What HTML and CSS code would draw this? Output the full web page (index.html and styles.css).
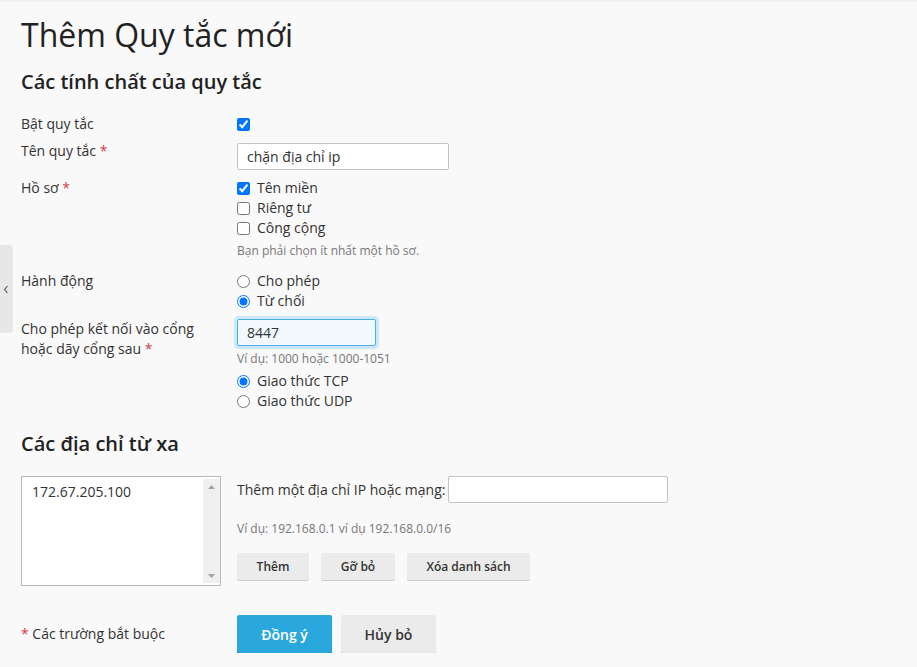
FILE: index.html
```html
<!DOCTYPE html>
<html lang="vi">
<head>
<meta charset="utf-8">
<title>Thêm Quy tắc mới</title>
<link rel="stylesheet" href="styles.css">
</head>
<body>
<div class="side-toggle"><svg width="6" height="9" viewBox="0 0 6 9"><path d="M4.5 1 L1.5 4.5 L4.5 8" fill="none" stroke="#555" stroke-width="1.1"/></svg></div>
<main class="page">
  <h1 class="title">Thêm Quy tắc mới</h1>
  <h2 class="section">Các tính chất của quy tắc</h2>

  <div class="row r-enable">
    <div class="label">Bật quy tắc</div>
    <div class="field"><label class="opt"><input type="checkbox" checked></label></div>
  </div>

  <div class="row r-name">
    <div class="label">Tên quy tắc <span class="req">*</span></div>
    <div class="field"><input class="text w-name" type="text" value="chặn địa chỉ ip"></div>
  </div>

  <div class="row r-profile">
    <div class="label">Hồ sơ <span class="req">*</span></div>
    <div class="field">
      <label class="opt"><input type="checkbox" checked> Tên miền</label>
      <label class="opt"><input type="checkbox"> Riêng tư</label>
      <label class="opt"><input type="checkbox"> Công cộng</label>
      <div class="hint h-profile">Bạn phải chọn ít nhất một hồ sơ.</div>
    </div>
  </div>

  <div class="row r-action">
    <div class="label">Hành động</div>
    <div class="field">
      <label class="opt"><input type="radio" name="act"> Cho phép</label>
      <label class="opt"><input type="radio" name="act" checked> Từ chối</label>
    </div>
  </div>

  <div class="row r-port">
    <div class="label">Cho phép kết nối vào cổng<br>hoặc dãy cổng sau <span class="req">*</span></div>
    <div class="field">
      <input class="text w-port focus" type="text" value="8447">
      <div class="hint h-port">Ví dụ: 1000 hoặc 1000-1051</div>
      <div class="protos">
        <label class="opt"><input type="radio" name="proto" checked> Giao thức TCP</label>
        <label class="opt"><input type="radio" name="proto"> Giao thức UDP</label>
      </div>
    </div>
  </div>

  <h2 class="section s-remote">Các địa chỉ từ xa</h2>

  <div class="row r-remote">
    <div class="listbox">
      <div class="list-items"><div class="list-item">172.67.205.100</div></div>
      <div class="list-scroll">
        <svg width="7" height="4" viewBox="0 0 7 4"><path d="M0 4 L3.5 0 L7 4Z" fill="#a3a3a3"/></svg>
        <svg width="7" height="4" viewBox="0 0 7 4"><path d="M0 0 L3.5 4 L7 0Z" fill="#a3a3a3"/></svg>
      </div>
    </div>
    <div class="field remote-field">
      <div class="add-line">
        <span>Thêm một địa chỉ IP hoặc mạng:</span>
        <input class="text w-ip" type="text">
      </div>
      <div class="hint h-ip">Ví dụ: 192.168.0.1 ví dụ 192.168.0.0/16</div>
      <div class="btns">
        <button class="btn b-add">Thêm</button>
        <button class="btn b-rem">Gỡ bỏ</button>
        <button class="btn b-clear">Xóa danh sách</button>
      </div>
    </div>
  </div>

  <div class="row r-footer">
    <div class="label"><span class="req">*</span> Các trường bắt buộc</div>
    <div class="field footer-btns">
      <button class="btn big primary">Đồng ý</button>
      <button class="btn big">Hủy bỏ</button>
    </div>
  </div>
</main>
</body>
</html>
```

FILE: styles.css
```css
* { box-sizing: border-box; }
html, body { margin: 0; padding: 0; }
body {
  background: #f9f9f9;
  font-family: "Open Sans", "Noto Sans", sans-serif;
  color: #333;
  font-size: 14px;
  line-height: 20px;
  border-top: 2px solid #f1f1f1;
}
.side-toggle {
  position: absolute;
  left: 0;
  top: 245px;
  width: 13px;
  height: 88px;
  background: #e7e7e7;
  border-radius: 0 4px 4px 0;
  display: flex;
  align-items: center;
  justify-content: center;
  padding-right: 2px;
}
.page { padding: 0 21px; }
.title {
  margin: 13px 0 0;
  font-size: 32px;
  line-height: 40px;
  font-weight: 400;
  color: #222;
}
.section {
  margin: 15px 0 0;
  font-size: 20px;
  line-height: 24px;
  font-weight: 600;
  color: #222;
}
.row {
  display: grid;
  grid-template-columns: 216px 1fr;
  align-items: start;
}
.label { color: #333; }
.req { color: #d3394f; }
.field { display: flex; flex-direction: column; align-items: flex-start; }
.opt {
  display: flex;
  align-items: center;
  height: 20px;
  gap: 7px;
  color: #333;
}
.opt input { margin: 0; width: 13px; height: 13px; }
.hint { font-size: 12px; line-height: 16px; color: #777; }
.text {
  font-family: inherit;
  font-size: 14px;
  color: #333;
  height: 27px;
  border: 1px solid #c4c4c4;
  border-radius: 2px;
  background: #fff;
  padding: 0 9px;
  margin: 0;
  outline: none;
}
.w-name { width: 212px; }
.w-port { width: 139px; }
.w-ip { width: 220px; }
.focus {
  border-color: #4db0e6;
  background: #f1f9ff;
  box-shadow: 0 0 0 3px #cbe7f9;
}
.r-enable { margin-top: 20px; }
.r-name { margin-top: 7px; }
.r-name .text { margin-top: 2px; }
.r-profile { margin-top: 8px; }
.h-profile { margin-top: 5px; }
.r-action { margin-top: 12px; }
.r-port { margin-top: 8px; }
.r-port .text { margin-top: 0; }
.h-port { margin-top: 5px; }
.protos { margin-top: 4px; display: flex; flex-direction: column; }
.s-remote { margin-top: 21px; }
.r-remote { margin-top: 20px; }
.listbox {
  width: 200px;
  height: 110px;
  border: 1px solid #b9b9b9;
  background: #fff;
  display: flex;
  padding: 2px 0 2px 2px;
}
.list-items { flex: 1; padding: 3px 0 0 8px; font-size: 14px; }
.list-scroll {
  width: 17px;
  background: #f0f0f0;
  display: flex;
  flex-direction: column;
  justify-content: space-between;
  align-items: center;
  padding: 6px 0 5px;
}
.add-line { display: flex; align-items: center; gap: 3px; height: 27px; }
.h-ip { margin-top: 18px; }
.btns { display: flex; gap: 12px; margin-top: 16px; }
.btn {
  font-family: inherit;
  font-size: 12px;
  font-weight: 600;
  color: #333;
  background: #ebebeb;
  border: none;
  border-radius: 2px;
  box-shadow: 0 1px 0 #cfcfcf;
  height: 27px;
  margin: 0;
  padding: 0;
}
.b-add { width: 72px; }
.b-rem { width: 74px; }
.b-clear { width: 123px; }
.r-footer { margin-top: 29px; align-items: center; }
.footer-btns { flex-direction: row; gap: 9px; }
.btn.big {
  height: 38px;
  width: 95px;
  font-size: 14px;
  box-shadow: 0 2px 0 #c9c9c9;
}
.btn.primary {
  background: #2aa8de;
  color: #fff;
  box-shadow: 0 2px 0 #1d86b6;
}
```
